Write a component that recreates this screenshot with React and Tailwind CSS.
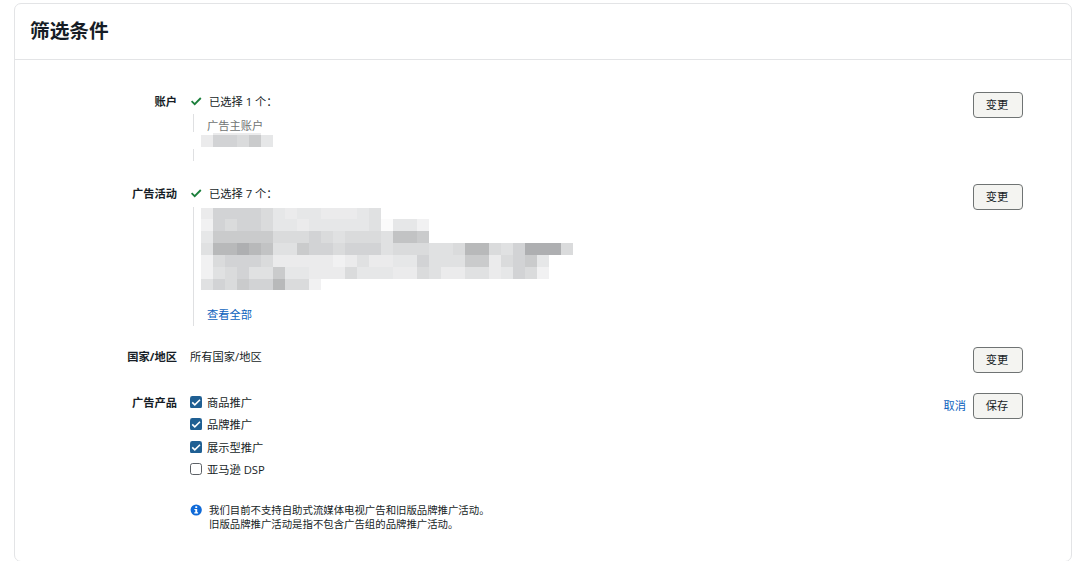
import React, { useState } from "react";

// shades of the redacted blocks, "." is an empty cell
const shades = {
  ".": "bg-transparent",
  0: "bg-[#fbfbfb]",
  1: "bg-[#f1f1f2]",
  2: "bg-[#ebebec]",
  3: "bg-[#e6e7e8]",
  4: "bg-[#e0e1e2]",
  5: "bg-[#dadbdc]",
  6: "bg-[#d2d3d5]",
  7: "bg-[#cacbcc]",
  8: "bg-[#c2c3c4]",
  9: "bg-[#b8b9ba]",
  a: "bg-[#aeafb1]",
};

const accountBlocks = [
  { cells: ".2222.", height: "h-[2px]" },
  { cells: "266573", height: "h-[12px]" },
];

const campaignBlocks = [
  { cells: "266665323322234", height: "h-[11px]" },
  { cells: "1656653323333340331", height: "h-[12px]" },
  { cells: "3777775556545554887", height: "h-[12px]" },
  { cells: "499a98447665666455544599546aaa5", height: "h-[12px]" },
  { cells: "15666522222124223364447725673", height: "h-[12px]" },
  { cells: "14564473322253332254224423651", height: "h-[12px]" },
  { cells: "4657669551", height: "h-[11px]" },
];

const Mosaic = ({ rows }) => (
  <div className="flex flex-col">
    {rows.map((row, i) => (
      <div key={i} className={`flex ${row.height}`}>
        {row.cells.split("").map((c, j) => (
          <span key={j} className={`w-3 ${shades[c]}`} />
        ))}
      </div>
    ))}
  </div>
);

const Button = ({ children }) => (
  <button className="h-[26px] w-[50px] rounded-[4px] border border-[#6f7373] bg-[#f4f4f1] pr-[2px] text-[11.25px] leading-none text-[#161d26]">
    {children}
  </button>
);

const Row = ({ label, height, action, children }) => (
  <div className={`flex items-start ${height}`}>
    <div className="w-[162px] text-right font-bold leading-5">{label}</div>
    <div className="ml-[13px] flex-1">{children}</div>
    <div className="mr-12 flex items-center gap-[7px]">{action}</div>
  </div>
);

const Selected = ({ count }) => (
  <div className="flex h-[18px] items-start">
    <svg className="mt-[3px] h-3 w-3" viewBox="0 0 12 12" fill="none">
      <path d="M1.6 6.2 4.7 9.2 10.8 3" stroke="#1b7f3b" strokeWidth="1.8" />
    </svg>
    <span className="ml-[7px] whitespace-pre leading-5">已选择 {count} 个：</span>
  </div>
);

const products = [
  { name: "商品推广", on: true },
  { name: "品牌推广", on: true },
  { name: "展示型推广", on: true },
  { name: "亚马逊 DSP", on: false },
];

const App = () => {
  const [items, setItems] = useState(products);

  const toggle = (index) =>
    setItems(items.map((p, i) => (i === index ? { ...p, on: !p.on } : p)));

  return (
    <div className="h-[561px] overflow-hidden bg-white pl-[14px] pr-[7px] pt-[3px] font-['Open_Sans','Noto_Sans_CJK_SC',sans-serif] text-[11.25px] text-[#161d26]">
      <div className="h-[559px] rounded-[7px] border border-[#e3e4e6]">
        <div className="flex h-14 items-center border-b border-[#e3e4e6] pb-[2px] pl-[15px]">
          <h1 className="text-[19.7px] font-bold leading-7">筛选条件</h1>
        </div>

        <div className="pt-8">
          <Row label="账户" height="h-[92px]" action={<Button>变更</Button>}>
            <Selected count={1} />
            <div className="ml-[3px] mt-1 h-[18px] border-l border-[#dfe0e2] pl-[13px] leading-6 text-[#6f7373]">
              广告主账户
            </div>
            <div className="ml-[11px] mt-px">
              <Mosaic rows={accountBlocks} />
            </div>
            <div className="ml-[3px] mt-[2px] h-3 border-l border-[#dfe0e2]" />
          </Row>

          <Row label="广告活动" height="h-[163px]" action={<Button>变更</Button>}>
            <Selected count={7} />
            <div className="ml-[3px] mt-[5px] h-[119px] border-l border-[#dfe0e2] pl-[7px] pt-px">
              <Mosaic rows={campaignBlocks} />
              <a className="ml-[6px] mt-[15px] block leading-[19px] text-[#0b62bd]">
                查看全部
              </a>
            </div>
          </Row>

          <Row label="国家/地区" height="h-[46px]" action={<Button>变更</Button>}>
            <div className="leading-5">所有国家/地区</div>
          </Row>

          <Row
            label="广告产品"
            height="h-[168px]"
            action={
              <>
                <a className="text-[#0b62bd]">取消</a>
                <Button>保存</Button>
              </>
            }
          >
            {items.map((p, i) => (
              <label key={p.name} className="flex h-[22.4px] items-start">
                <input
                  type="checkbox"
                  className="sr-only"
                  checked={p.on}
                  onChange={() => toggle(i)}
                />
                <svg className="mt-[3px] h-3 w-3 shrink-0" viewBox="0 0 12 12" fill="none">
                  {p.on ? (
                    <>
                      <rect width="12" height="12.5" rx="2.4" fill="#1f5f93" />
                      <path d="M2.2 6.3 4.8 8.8 10 3.7" stroke="#fff" strokeWidth="1.6" />
                    </>
                  ) : (
                    <rect x=".5" y=".5" width="11" height="11" rx="2.2" stroke="#5c6066" />
                  )}
                </svg>
                <span className="ml-[5px] leading-[19px]">{p.name}</span>
              </label>
            ))}
            <div className="mt-[20px] flex items-start">
              <svg className="mt-px h-3 w-3 shrink-0" viewBox="0 0 12 12">
                <circle cx="6.2" cy="6" r="5.6" fill="#0f6ad8" />
                <path
                  d="M5.3 2.3h1.9v1.6H5.3zM4.4 4.9h2.8v3.4h.9v1.2H4.3V8.3h1V6.1h-.9z"
                  fill="#fff"
                />
              </svg>
              <p className="ml-[7px] text-[10.4px] leading-[14px]">
                我们目前不支持自助式流媒体电视广告和旧版品牌推广活动。
                <br />
                旧版品牌推广活动是指不包含广告组的品牌推广活动。
              </p>
            </div>
          </Row>
        </div>
      </div>
    </div>
  );
};

export default App;
